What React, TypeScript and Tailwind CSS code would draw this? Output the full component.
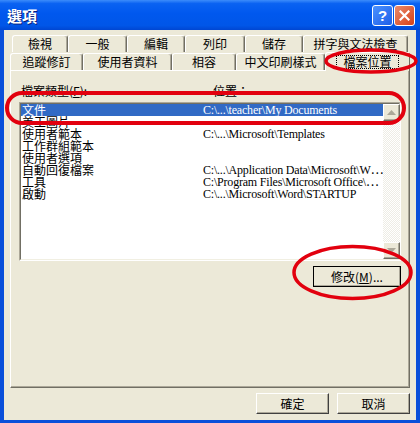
import React from "react";

type TabProps = { label: string; w: string; selected?: boolean };

function Tab({ label, w, selected }: TabProps) {
  if (selected) {
    return (
      <div
        className={`${w} relative z-10 -mt-[2px] -mb-[1px] h-[19px] bg-[#ECE9D8] border-t border-l border-white border-r border-r-[#716F64] rounded-t-[3px] flex items-center justify-center`}
      >
        <span className="px-[6px] h-[14px] border border-dotted border-black leading-[12px] flex items-center">
          {label}
        </span>
      </div>
    );
  }
  return (
    <div
      className={`${w} h-[17px] bg-[#ECE9D8] border-t border-l border-white border-r border-r-[#716F64] shadow-[inset_-1px_0_0_#ACA899] rounded-t-[3px] flex items-center justify-center leading-[12px]`}
    >
      {label}
    </div>
  );
}

const rows: [string, string][] = [
  ["文件", "C:\\...\\teacher\\My Documents"],
  ["美工圖片", ""],
  ["使用者範本", "C:\\...\\Microsoft\\Templates"],
  ["工作群組範本", ""],
  ["使用者選項", ""],
  ["自動回復檔案", "C:\\...\\Application Data\\Microsoft\\W⋯"],
  ["工具", "C:\\Program Files\\Microsoft Office\\⋯"],
  ["啟動", "C:\\...\\Microsoft\\Word\\STARTUP"],
];

function ScrollBtn({ up }: { up?: boolean }) {
  return (
    <div className="h-[17px] w-[17px] bg-[#ECE9D8] border border-white border-r-[#716F64] border-b-[#716F64] shadow-[inset_-1px_-1px_0_#ACA899] flex items-center justify-center">
      <svg width="9" height="5" viewBox="0 0 9 5">
        {up ? (
          <path d="M4.5 0 L9 5 L0 5 Z" fill="#ACA899" />
        ) : (
          <path d="M0 0 L9 0 L4.5 5 Z" fill="#ACA899" />
        )}
      </svg>
    </div>
  );
}

function Btn({ children, w, focus }: { children: React.ReactNode; w: string; focus?: boolean }) {
  return (
    <div
      className={`${w} h-[21px] bg-[#ECE9D8] border ${
        focus ? "border-black" : "border-white border-r-[#404040] border-b-[#404040]"
      } shadow-[inset_-1px_-1px_0_#ACA899] flex items-center justify-center leading-[12px]`}
    >
      {children}
    </div>
  );
}

export default function App() {
  return (
    <div className="w-[420px] h-[423px] relative bg-[#0A4FDA] flex flex-col overflow-hidden font-['Noto_Sans_CJK_TC','Noto_Sans_CJK_SC',sans-serif] text-[12px] text-black">
      {/* title bar */}
      <div className="h-[30px] shrink-0 bg-[linear-gradient(to_bottom,#3C8CFB_0%,#0A62F2_12%,#0058EE_45%,#0056E8_85%,#0046D2_100%)] flex items-center pl-[7px] pr-[5px]">
        <span className="text-white font-bold text-[15px] leading-[15px] [text-shadow:1px_1px_0_#0A1E7A]">選項</span>
        <div className="ml-auto flex gap-[1px]">
          <div className="w-[21px] h-[21px] rounded-[3px] border border-white bg-[linear-gradient(135deg,#4B92FF,#1E5EE8)] flex items-center justify-center text-white font-bold text-[15px] leading-[15px] font-['Liberation_Sans',sans-serif]">
            ?
          </div>
          <div className="w-[21px] h-[21px] rounded-[3px] border border-white bg-[linear-gradient(135deg,#E98A6B,#D64018)] flex items-center justify-center">
            <svg width="11" height="11" viewBox="0 0 11 11">
              <path d="M1.5 1.5 L9.5 9.5 M9.5 1.5 L1.5 9.5" stroke="white" strokeWidth="2.2" strokeLinecap="square" />
            </svg>
          </div>
        </div>
      </div>

      {/* body */}
      <div className="flex-1 mx-[4px] mb-[3px] bg-[#ECE9D8] flex flex-col px-[6px] pt-[5px]">
        {/* tabs */}
        <div className="flex ml-[2px] h-[18px]">
          <Tab label="檢視" w="w-[56px]" />
          <Tab label="一般" w="w-[59px]" />
          <Tab label="編輯" w="w-[58px]" />
          <Tab label="列印" w="w-[60px]" />
          <Tab label="儲存" w="w-[58px]" />
          <Tab label="拼字與文法檢查" w="w-[105px]" />
        </div>
        <div className="flex items-end h-[17px]">
          <Tab label="追蹤修訂" w="w-[73px]" />
          <Tab label="使用者資料" w="w-[89px]" />
          <Tab label="相容" w="w-[64px]" />
          <Tab label="中文印刷樣式" w="w-[89px]" />
          <Tab label="檔案位置" w="w-[85px]" selected />
        </div>

        {/* panel */}
        <div className="h-[318px] border border-white border-r-[#716F64] border-b-[#716F64] shadow-[inset_-1px_-1px_0_#ACA899] flex flex-col pl-[8px] pr-[8px] pt-[14px]">
          <div className="flex h-[12px] leading-[12px]">
            <span className="w-[192px] ml-[2px]">
              檔案類型(<span className="underline">F</span>):
            </span>
            <span>位置：</span>
          </div>
          <div className="mt-[5px] h-[159px] border border-[#ACA899] border-r-white border-b-white">
            <div className="h-full border border-[#716F64] border-r-[#F1EFE2] border-b-[#F1EFE2] bg-white flex">
              <div className="flex-1 flex flex-col">
                {rows.map(([name, path], i) => (
                  <div
                    key={name}
                    className={`h-[12px] flex items-center leading-[12px] ${
                      i === 0 ? "bg-[#316AC5] text-white" : ""
                    }`}
                  >
                    <span className="w-[182px] pl-[1px] whitespace-nowrap">{name}</span>
                    <span className="font-['Liberation_Serif','Noto_Sans_CJK_TC',serif] text-[12px] whitespace-nowrap tracking-[-0.2px]">
                      {path}
                    </span>
                  </div>
                ))}
              </div>
              <div className="w-[17px] flex flex-col bg-[repeating-conic-gradient(#FFFFFF_0_25%,#EEEDE5_0_50%)] bg-[length:2px_2px]">
                <ScrollBtn up />
                <div className="flex-1" />
                <ScrollBtn />
              </div>
            </div>
          </div>
          <div className="mt-[5px] flex justify-end">
            <Btn w="w-[88px]" focus>
              <span>
                修改(<span className="underline">M</span>)...
              </span>
            </Btn>
          </div>
        </div>

        {/* bottom buttons */}
        <div className="mt-[5px] flex justify-end gap-[8px]">
          <Btn w="w-[73px]">確定</Btn>
          <Btn w="w-[73px]">取消</Btn>
        </div>
      </div>

      {/* red annotation marks */}
      <svg className="absolute inset-0 z-30 pointer-events-none" width="420" height="423" viewBox="0 0 420 423">
        <ellipse cx="371" cy="61" rx="45" ry="11" fill="none" stroke="#E2000E" strokeWidth="3.5" />
        <rect x="7" y="93" width="397" height="30" rx="15" fill="none" stroke="#E2000E" strokeWidth="4" />
        <ellipse cx="352.5" cy="272.5" rx="58.5" ry="26" fill="none" stroke="#E2000E" strokeWidth="3.5" />
      </svg>
    </div>
  );
}
